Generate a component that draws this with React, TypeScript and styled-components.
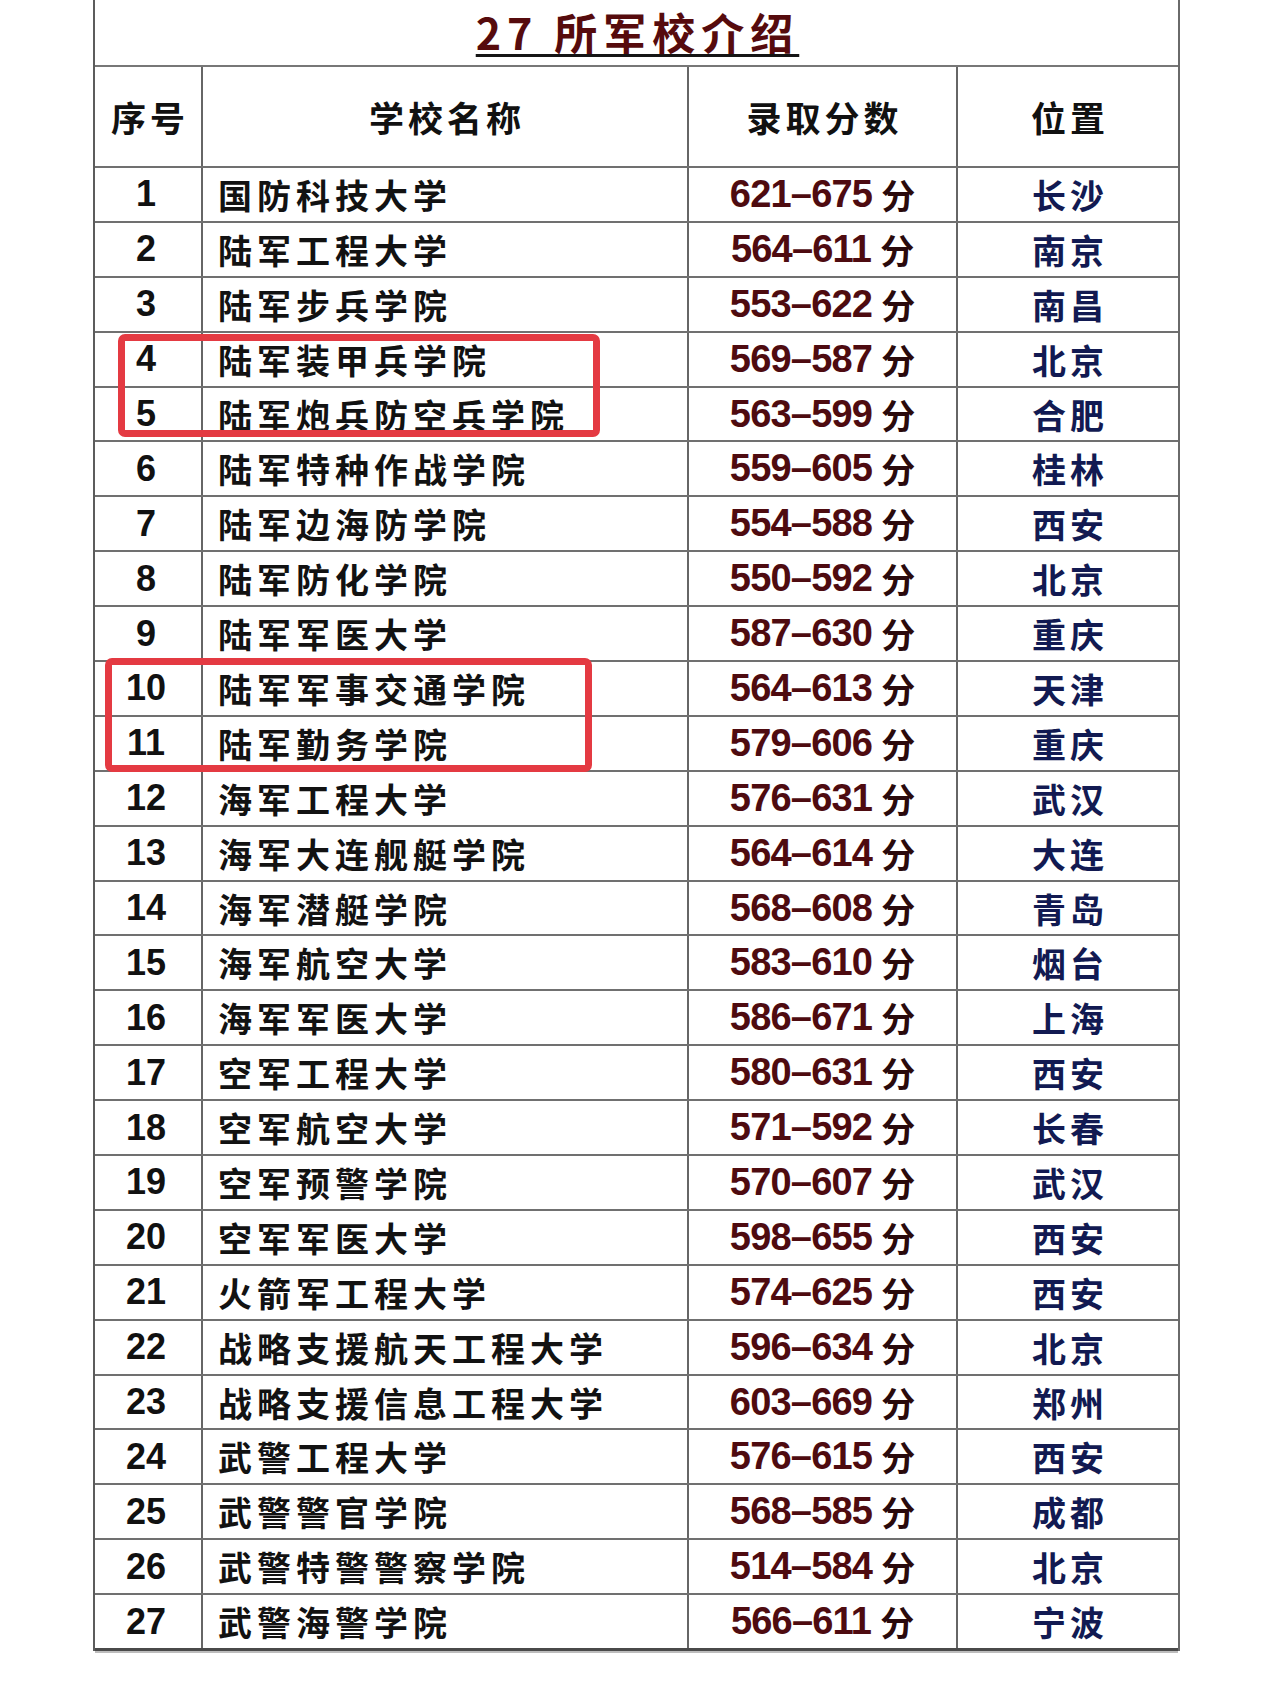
import React from 'react';
import styled, { createGlobalStyle } from 'styled-components';

const ROW_H = 54.9;

const GlobalStyle = createGlobalStyle`
  html, body {
    margin: 0;
    padding: 0;
    background: #fff;
  }
  * {
    box-sizing: border-box;
  }
`;

const schools: [string, string, string][] = [
    ['国防科技大学', '621-675', '长沙'],
    ['陆军工程大学', '564-611', '南京'],
    ['陆军步兵学院', '553-622', '南昌'],
    ['陆军装甲兵学院', '569-587', '北京'],
    ['陆军炮兵防空兵学院', '563-599', '合肥'],
    ['陆军特种作战学院', '559-605', '桂林'],
    ['陆军边海防学院', '554-588', '西安'],
    ['陆军防化学院', '550-592', '北京'],
    ['陆军军医大学', '587-630', '重庆'],
    ['陆军军事交通学院', '564-613', '天津'],
    ['陆军勤务学院', '579-606', '重庆'],
    ['海军工程大学', '576-631', '武汉'],
    ['海军大连舰艇学院', '564-614', '大连'],
    ['海军潜艇学院', '568-608', '青岛'],
    ['海军航空大学', '583-610', '烟台'],
    ['海军军医大学', '586-671', '上海'],
    ['空军工程大学', '580-631', '西安'],
    ['空军航空大学', '571-592', '长春'],
    ['空军预警学院', '570-607', '武汉'],
    ['空军军医大学', '598-655', '西安'],
    ['火箭军工程大学', '574-625', '西安'],
    ['战略支援航天工程大学', '596-634', '北京'],
    ['战略支援信息工程大学', '603-669', '郑州'],
    ['武警工程大学', '576-615', '西安'],
    ['武警警官学院', '568-585', '成都'],
    ['武警特警警察学院', '514-584', '北京'],
    ['武警海警学院', '566-611', '宁波'],
];

// rows boxed in red
const highlights = [
    { row: 3, dy: 3, left: 23, width: 482, height: 103 },
    { row: 9, dy: -2, left: 10, width: 487, height: 114 },
];

const Page = styled.div`
  width: 1280px;
  height: 1684px;
  padding-left: 93px;
  background: #fff;
`;

const Sheet = styled.div`
  width: 1087px;
  border-left: 2px solid #5c5c5c;
  border-right: 2px solid #6a6a6a;
`;

const TitleBar = styled.div`
  height: 67px;
  display: flex;
  justify-content: center;
  align-items: flex-start;
  padding-right: 4px;
  border-bottom: 2px solid #777;
`;

const Title = styled.span`
  font-family: "Noto Sans CJK SC", sans-serif;
  font-weight: 700;
  font-size: 43px;
  line-height: 63px;
  letter-spacing: 6px;
  margin-right: -6px;
  color: #560b0d;
  text-decoration: underline;
  text-decoration-color: #151515;
  text-decoration-thickness: 3px;
  text-underline-offset: 4px;
`;

const Row = styled.div<{ $head?: boolean }>`
  display: grid;
  grid-template-columns: 108px 486px 269px 1fr;
  height: ${(p) => (p.$head ? '99px' : `${ROW_H}px`)};
  border-top: ${(p) => (p.$head ? 'none' : '2px solid #707070')};
`;

const Cell = styled.div<{ $align?: 'left' | 'center'; $last?: boolean }>`
  display: flex;
  align-items: center;
  justify-content: ${(p) => (p.$align === 'left' ? 'flex-start' : 'center')};
  padding-left: ${(p) => (p.$align === 'left' ? '15px' : '0')};
  border-right: ${(p) => (p.$last ? 'none' : '2px solid #666')};
  overflow: hidden;
  white-space: nowrap;
`;

const HeadText = styled.span`
  font-family: "Noto Sans CJK SC", sans-serif;
  font-weight: 700;
  font-size: 35px;
  letter-spacing: 4px;
  margin-right: -4px;
  color: #111;
`;

const Seq = styled.span`
  font-family: "Liberation Sans", Arial, sans-serif;
  font-weight: 700;
  font-size: 36px;
  color: #111;
  margin-left: -4px;
`;

const Name = styled.span`
  font-family: "Noto Sans CJK SC", sans-serif;
  font-weight: 700;
  font-size: 34px;
  letter-spacing: 5px;
  color: #121212;
`;

const Score = styled.span`
  font-family: "Liberation Sans", Arial, sans-serif;
  font-weight: 700;
  font-size: 38px;
  letter-spacing: -0.8px;
  color: #4e0b10;
`;

const Fen = styled.span`
  font-family: "Noto Sans CJK SC", sans-serif;
  font-weight: 700;
  font-size: 34px;
  margin-left: 9px;
  color: #2a0a0c;
`;

const Place = styled.span`
  font-family: "Noto Sans CJK SC", sans-serif;
  font-weight: 700;
  font-size: 34px;
  letter-spacing: 4px;
  margin-right: -4px;
  color: #121a52;
`;

const Body = styled.div`
  position: relative;
  border-bottom: 3px solid #4a4a4a;
  box-shadow: 0 2px 0 #bdbdbd;
`;

const Highlight = styled.div<{ $top: number; $left: number; $w: number; $h: number }>`
  position: absolute;
  top: ${(p) => p.$top}px;
  left: ${(p) => p.$left}px;
  width: ${(p) => p.$w}px;
  height: ${(p) => p.$h}px;
  border: 7px solid #e43a42;
  border-radius: 7px;
  pointer-events: none;
`;

const App = () => {
    return (
        <Page>
            <GlobalStyle />
            <Sheet>
                <TitleBar>
                    <Title>27 所军校介绍</Title>
                </TitleBar>

                <Row $head>
                    <Cell><HeadText>序号</HeadText></Cell>
                    <Cell><HeadText>学校名称</HeadText></Cell>
                    <Cell><HeadText>录取分数</HeadText></Cell>
                    <Cell $last><HeadText>位置</HeadText></Cell>
                </Row>

                <Body>
                    {schools.map(([name, score, place], i) => (
                        <Row key={name + i}>
                            <Cell><Seq>{i + 1}</Seq></Cell>
                            <Cell $align="left"><Name>{name}</Name></Cell>
                            <Cell>
                                <Score>{score.replace('-', '–')}</Score>
                                <Fen>分</Fen>
                            </Cell>
                            <Cell $last><Place>{place}</Place></Cell>
                        </Row>
                    ))}
                    {highlights.map((h) => (
                        <Highlight
                            key={h.row}
                            $top={h.row * ROW_H + h.dy}
                            $left={h.left}
                            $w={h.width}
                            $h={h.height}
                        />
                    ))}
                </Body>
            </Sheet>
        </Page>
    );
};

export default App;
